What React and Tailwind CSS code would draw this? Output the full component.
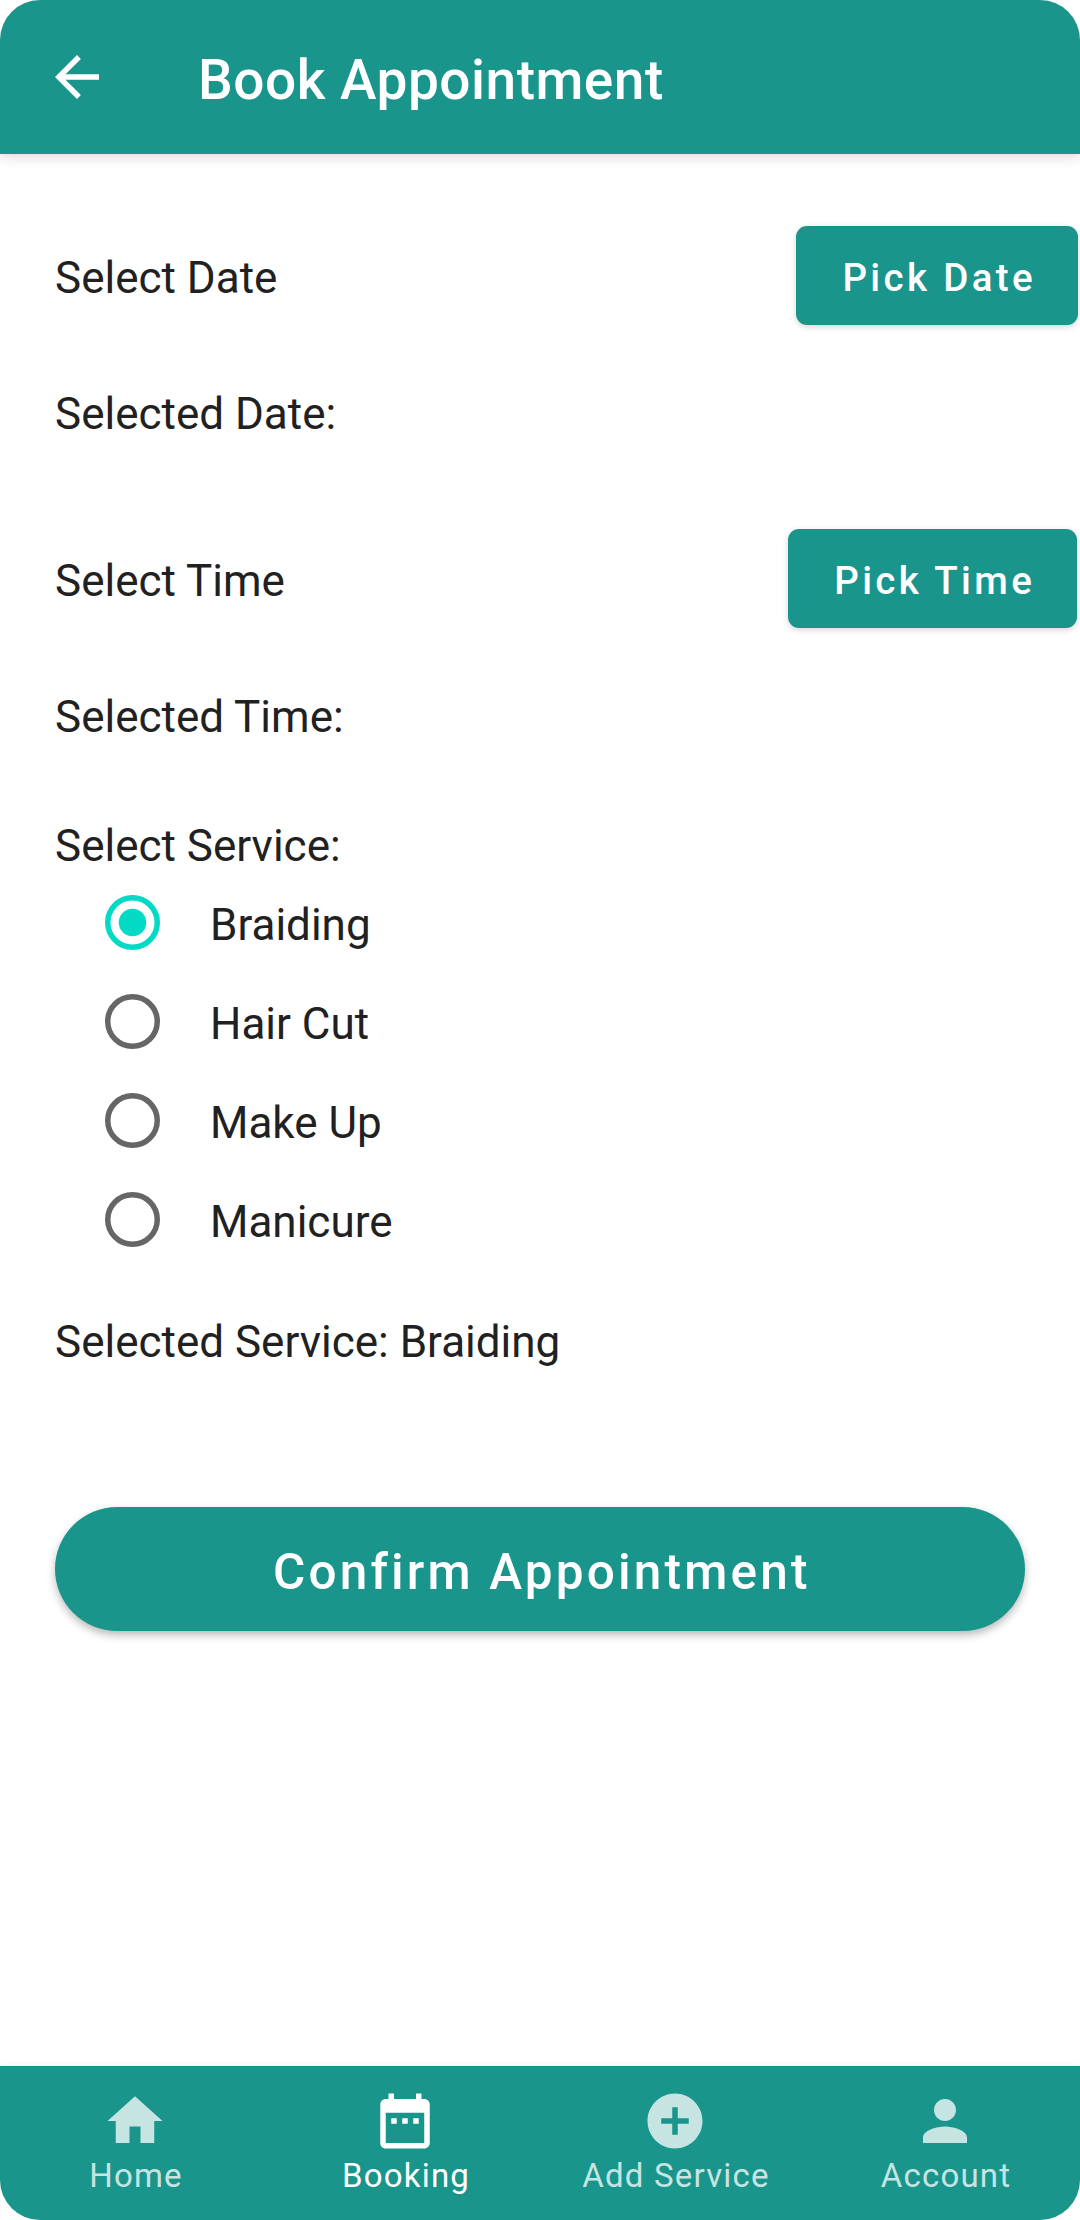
import { useState } from "react";

const services = ["Braiding", "Hair Cut", "Make Up", "Manicure"];

const tabs = [
  { label: "Home", path: "M10 20v-6h4v6h5v-8h3L12 3 2 12h3v8z" },
  {
    label: "Booking",
    path: "M9 11H7v2h2v-2zm4 0h-2v2h2v-2zm4 0h-2v2h2v-2zm2-7h-1V2h-2v2H8V2H6v2H5c-1.11 0-1.99.9-1.99 2L3 20c0 1.1.89 2 2 2h14c1.1 0 2-.9 2-2V6c0-1.1-.9-2-2-2zm0 16H5V9h14v11z",
  },
  {
    label: "Add Service",
    path: "M12 2C6.48 2 2 6.48 2 12s4.48 10 10 10 10-4.48 10-10S17.52 2 12 2zm5 11h-4v4h-2v-4H7v-2h4V7h2v4h4v2z",
  },
  {
    label: "Account",
    path: "M12 12c2.21 0 4-1.79 4-4s-1.79-4-4-4-4 1.79-4 4 1.79 4 4 4zm0 2c-2.67 0-8 1.34-8 4v2h16v-2c0-2.66-5.33-4-8-4z",
  },
];

function Icon({ path }) {
  return (
    <svg viewBox="0 0 24 24" className="size-[66px] shrink-0 fill-current">
      <path d={path} />
    </svg>
  );
}

function PickerButton({ children, className }) {
  return (
    <button
      className={`h-[99px] shrink-0 rounded-[11px] bg-[#1a958c] pl-[4.4px] text-center text-[38.5px] leading-[103px] font-medium tracking-[3.35px] whitespace-nowrap text-white shadow-[0_2px_6px_rgba(0,0,0,0.16)] ${className}`}
    >
      {children}
    </button>
  );
}

function Radio({ label, checked, onSelect }) {
  return (
    <button onClick={onSelect} className="flex h-[99px] items-center text-left">
      <svg viewBox="0 0 55 55" className={`size-[55px] ${checked ? "text-[#03dac5]" : "text-[#666666]"}`}>
        <circle cx="27.5" cy="27.5" r="24.75" fill="none" stroke="currentColor" strokeWidth="5.5" />
        {checked && <circle cx="27.5" cy="27.5" r="13.75" fill="currentColor" />}
      </svg>
      <span className="ml-[50px] pt-[5px] leading-[60px]">{label}</span>
    </button>
  );
}

export default function App() {
  const [service, setService] = useState("Braiding");
  const [tab, setTab] = useState("Booking");

  return (
    <div className="flex h-[2220px] w-[1080px] flex-col overflow-hidden rounded-[40px] bg-white font-['Roboto',sans-serif] text-[44px] leading-[60px] text-[#212121]">
      <header className="flex h-[154px] shrink-0 items-center bg-[#1a958c] pl-11 text-white shadow-[0_3px_12px_rgba(0,0,0,0.15)]">
        <Icon path="M20 11H7.83l5.59-5.59L12 4l-8 8 8 8 1.41-1.41L7.83 13H20v-2z" />
        <h1 className="ml-[88px] pt-1.5 text-[55px] leading-[70px] font-medium tracking-[0.5px]">Book Appointment</h1>
      </header>

      <main className="flex flex-1 flex-col pl-[55px]">
        <div className="mt-[72px] flex h-[99px] items-center justify-between pr-0.5">
          <span className="pt-[5px]">Select Date</span>
          <PickerButton className="w-[282px]">Pick Date</PickerButton>
        </div>
        <p className="mt-[59px]">Selected Date:</p>

        <div className="mt-[85px] flex h-[99px] items-center justify-between pr-[3px]">
          <span className="pt-[5px]">Select Time</span>
          <PickerButton className="w-[289px]">Pick Time</PickerButton>
        </div>
        <p className="mt-[59px]">Selected Time:</p>

        <p className="mt-[69px]">Select Service:</p>
        <div className="mt-[-3px] flex flex-col pl-[50px]">
          {services.map((s) => (
            <Radio key={s} label={s} checked={s === service} onSelect={() => setService(s)} />
          ))}
        </div>
        <p className="mt-[43px]">Selected Service: {service}</p>

        <button className="mt-[135px] mr-[55px] h-[124px] rounded-[62px] bg-[#1a958c] pl-[3.5px] text-center text-[49.5px] leading-[130px] font-medium tracking-[3.17px] text-white shadow-[0_4px_8px_rgba(0,0,0,0.28)]">
          Confirm Appointment
        </button>
      </main>

      <nav className="grid h-[154px] shrink-0 grid-cols-4 bg-[#1a958c] shadow-[0_0_8px_rgba(0,0,0,0.06)]">
        {tabs.map(({ label, path }) => (
          <button
            key={label}
            onClick={() => setTab(label)}
            className={`flex flex-col items-center pt-[22px] ${label === tab ? "text-white" : "text-[#c6e4e2]"}`}
          >
            <Icon path={path} />
            <span className="mt-0.5 pl-0.5 text-[33px] leading-[39px] tracking-[1.2px]">{label}</span>
          </button>
        ))}
      </nav>
    </div>
  );
}
